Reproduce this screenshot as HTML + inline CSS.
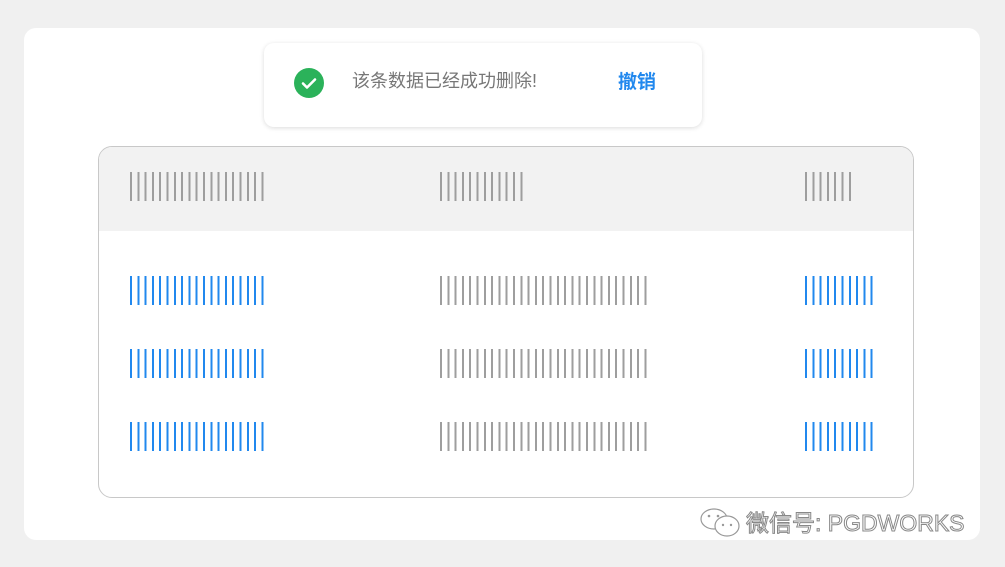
<!DOCTYPE html>
<html><head><meta charset="utf-8"><style>
html,body{margin:0;padding:0;}
body{width:1005px;height:567px;background:#f0f0f0;position:relative;overflow:hidden;font-family:"Liberation Sans","Noto Sans CJK SC",sans-serif;}
.card{position:absolute;left:24px;top:28px;width:956px;height:512px;background:#fff;border-radius:12px;}
.toast{position:absolute;left:264px;top:43px;width:438px;height:84px;background:#fff;border-radius:10px;box-shadow:0 1px 5px rgba(0,0,0,0.14);}
.check{position:absolute;left:30px;top:25px;width:30px;height:30px;border-radius:50%;background:#2bb25a;}
.msg{position:absolute;left:88px;top:26px;font-size:18px;color:#777;line-height:24px;}
.undo{position:absolute;left:354px;top:28px;font-size:19px;color:#2188ee;line-height:24px;font-weight:bold;}
.table{position:absolute;left:98px;top:146px;width:814px;height:350px;border:1px solid #c8c8c8;border-radius:14px;overflow:hidden;background:#fff;}
.head{position:absolute;left:0;top:0;width:100%;height:84px;background:#f2f2f2;}
.b{position:absolute;height:29px;}
.g{background:repeating-linear-gradient(90deg,#9e9e9e 0,#9e9e9e 2px,transparent 2px,transparent 7.3px);}
.u{background:repeating-linear-gradient(90deg,#2188ee 0,#2188ee 2px,transparent 2px,transparent 7.3px);}
.wm{position:absolute;left:746px;top:508px;font-size:23px;color:#fff;-webkit-text-stroke:1px #888;letter-spacing:0;line-height:30px;white-space:nowrap;}
</style></head><body>
<div class="card"></div>
<div class="toast">
  <div class="check"><svg width="30" height="30" viewBox="0 0 30 30"><path d="M9 15.5l4 4 8-8" fill="none" stroke="#fff" stroke-width="2.6" stroke-linecap="round" stroke-linejoin="round"/></svg></div>
  <div class="msg">该条数据已经成功删除!</div>
  <div class="undo">撤销</div>
</div>
<div class="table"><div class="head"></div></div>
<div class="b g" style="left:130px;top:172px;width:134px"></div>
<div class="b g" style="left:440px;top:172px;width:84px"></div>
<div class="b g" style="left:805px;top:172px;width:46px"></div>

<div class="b u" style="left:130px;top:276px;width:134px"></div>
<div class="b g" style="left:440px;top:276px;width:207px"></div>
<div class="b u" style="left:805px;top:276px;width:68px"></div>

<div class="b u" style="left:130px;top:349px;width:134px"></div>
<div class="b g" style="left:440px;top:349px;width:207px"></div>
<div class="b u" style="left:805px;top:349px;width:68px"></div>

<div class="b u" style="left:130px;top:422px;width:134px"></div>
<div class="b g" style="left:440px;top:422px;width:207px"></div>
<div class="b u" style="left:805px;top:422px;width:68px"></div>

<svg style="position:absolute;left:699px;top:506px" width="44" height="34" viewBox="0 0 44 34">
<ellipse cx="15" cy="13" rx="13" ry="10" fill="#fff" stroke="#999" stroke-width="1.2"/>
<ellipse cx="28" cy="20" rx="12" ry="10" fill="#fff" stroke="#999" stroke-width="1.2"/>
<circle cx="10" cy="10" r="1.3" fill="#999"/><circle cx="19" cy="10" r="1.3" fill="#999"/>
<circle cx="24" cy="19" r="1.2" fill="#999"/><circle cx="32" cy="19" r="1.2" fill="#999"/>
</svg>
<div class="wm">微信号: PGDWORKS</div>
</body></html>
